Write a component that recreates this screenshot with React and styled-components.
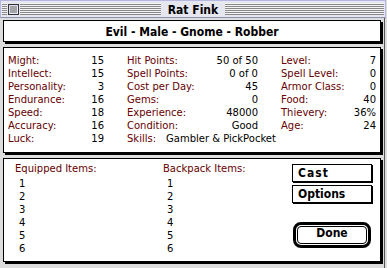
import React from 'react';
import styled, { createGlobalStyle } from 'styled-components';

const Global = createGlobalStyle`
  html, body { margin: 0; padding: 0; background: #dddddd; }
  body { width: 387px; height: 268px; overflow: hidden; }
`;

const chicago = `"DejaVu Sans Condensed", "DejaVu Sans", sans-serif`;
const geneva = `"DejaVu Sans", "Liberation Sans", sans-serif`;

const Window = styled.div`
  width: 387px;
  height: 268px;
  background: #dddddd;
  display: flex;
  flex-direction: column;
  font-family: ${geneva};
  font-size: 10px;
  color: #000;
`;

const TitleBar = styled.div`
  width: 386px;
  height: 18px;
  box-sizing: border-box;
  border: 1px solid #b6b6e2;
  border-bottom-color: #8e8eb0;
  background: #e6e6ee;
  padding: 2px 1px 0;
`;

const Stripes = styled.div`
  height: 12px;
  display: flex;
  background: repeating-linear-gradient(to bottom, #f4f4f4 0 1px, #888888 1px 2px);
`;

const CloseWrap = styled.div`
  margin-left: 5px;
  padding: 1px 1px 0;
  background: #e6e6ee;
  display: flex;
`;

const CloseBox = styled.div`
  width: 11px;
  height: 11px;
  box-sizing: border-box;
  border: 1px solid #333;
  background: #a4a4a4;
  box-shadow: inset 1px 1px 0 #d8d8f4, inset -1px -1px 0 #e8e8ff;
`;

const TitleCenter = styled.div`
  flex: 1;
  display: flex;
  justify-content: center;
  padding-right: 18px;
`;

const Title = styled.div`
  height: 12px;
  line-height: 14px;
  padding: 0 7px;
  background: #e6e6ee;
  font-family: ${chicago};
  font-weight: bold;
  font-size: 12px;
  white-space: nowrap;
`;

const Body = styled.div`
  flex: 1;
  width: 385px;
  box-sizing: border-box;
  border-right: 1px solid #555;
  padding: 2px 0 0 3px;
  display: flex;
  flex-direction: column;
  gap: 5px;
`;

const Panel = styled.div`
  width: 378px;
  height: ${p => p.$h}px;
  box-sizing: border-box;
  background: #fff;
  border: 1px solid #000;
  box-shadow: 2px 2px 0 #000;
`;

const Heading = styled.div`
  font-family: ${chicago};
  font-weight: bold;
  font-size: 12px;
  line-height: 16px;
  padding-top: 3px;
  text-align: center;
  white-space: nowrap;
`;

const StatsGrid = styled.div`
  display: grid;
  grid-template-columns: 96px 131px 95px;
  column-gap: 23px;
  grid-auto-rows: 13px;
  padding: 6px 0 0 4px;
  line-height: 13px;
`;

const Stat = styled.div`
  display: flex;
  justify-content: space-between;
  white-space: nowrap;
  grid-column: ${p => (p.$span ? `span ${p.$span}` : 'auto')};
`;

const Label = styled.span`
  color: #660000;
`;

const Value = styled.span`
  color: #000;
  margin-left: ${p => p.$gap || 0}px;
`;

const ItemsRow = styled.div`
  display: flex;
  padding: 3px 0 0 11px;
  height: 100%;
  box-sizing: border-box;
`;

const ItemColumn = styled.div`
  width: ${p => p.$w}px;
  display: flex;
  flex-direction: column;
  line-height: 13px;
`;

const ItemHeader = styled.div`
  color: #660000;
  margin-bottom: 2px;
  white-space: nowrap;
`;

const ItemNumber = styled.div`
  padding-left: 4px;
`;

const ButtonColumn = styled.div`
  display: flex;
  flex-direction: column;
  padding-top: 2px;
  width: 81px;
`;

const PlainButton = styled.button`
  width: 80px;
  height: 18px;
  box-sizing: border-box;
  margin: 0 0 ${p => p.$mb || 0}px;
  padding: 0 0 0 5px;
  border: 1px solid #000;
  box-shadow: 1px 1px 0 #000;
  background: #fff;
  text-align: left;
  font-family: ${chicago};
  font-weight: bold;
  font-size: 12px;
  line-height: 16px;
  color: #000;
  letter-spacing: ${p => p.$ls || 0}px;
`;

const DefaultRing = styled.div`
  margin: 19px 0 0 1px;
  width: 78px;
  height: 26px;
  box-sizing: border-box;
  border: 3px solid #000;
  border-radius: 8px;
  padding: 1px;
  display: flex;
`;

const DefaultButton = styled.button`
  flex: 1;
  box-sizing: border-box;
  border: 1px solid #000;
  border-radius: 4px;
  background: #fff;
  margin: 0;
  padding: 0 0 3px;
  font-family: ${chicago};
  font-weight: bold;
  font-size: 12px;
  line-height: 13px;
  color: #000;
  text-align: center;
`;

const stats = [
  [['Might:', '15'], ['Hit Points:', '50 of 50'], ['Level:', '7']],
  [['Intellect:', '15'], ['Spell Points:', '0 of 0'], ['Spell Level:', '0']],
  [['Personality:', '3'], ['Cost per Day:', '45'], ['Armor Class:', '0']],
  [['Endurance:', '16'], ['Gems:', '0'], ['Food:', '40']],
  [['Speed:', '18'], ['Experience:', '48000'], ['Thievery:', '36%']],
  [['Accuracy:', '16'], ['Condition:', 'Good'], ['Age:', '24']],
];

const slots = ['1', '2', '3', '4', '5', '6'];

export default function App() {
  return (
    <>
      <Global />
      <Window>
        <TitleBar>
          <Stripes>
            <CloseWrap>
              <CloseBox />
            </CloseWrap>
            <TitleCenter>
              <Title>Rat Fink</Title>
            </TitleCenter>
          </Stripes>
        </TitleBar>
        <Body>
          <Panel $h={22}>
            <Heading>Evil - Male - Gnome - Robber</Heading>
          </Panel>
          <Panel $h={106}>
            <StatsGrid>
              {stats.map((row, i) =>
                row.map(([l, v], j) => (
                  <Stat key={`${i}-${j}`}>
                    <Label>{l}</Label>
                    <Value>{v}</Value>
                  </Stat>
                ))
              )}
              <Stat>
                <Label>Luck:</Label>
                <Value>19</Value>
              </Stat>
              <Stat $span={2}>
                <span>
                  <Label>Skills:</Label>
                  <Value $gap={10}>Gambler &amp; PickPocket</Value>
                </span>
              </Stat>
            </StatsGrid>
          </Panel>
          <Panel $h={104}>
            <ItemsRow>
              <ItemColumn $w={148}>
                <ItemHeader>Equipped Items:</ItemHeader>
                {slots.map(s => (
                  <ItemNumber key={s}>{s}</ItemNumber>
                ))}
              </ItemColumn>
              <ItemColumn $w={129}>
                <ItemHeader>Backpack Items:</ItemHeader>
                {slots.map(s => (
                  <ItemNumber key={s}>{s}</ItemNumber>
                ))}
              </ItemColumn>
              <ButtonColumn>
                <PlainButton $mb={3} $ls={1}>Cast</PlainButton>
                <PlainButton>Options</PlainButton>
                <DefaultRing>
                  <DefaultButton>Done</DefaultButton>
                </DefaultRing>
              </ButtonColumn>
            </ItemsRow>
          </Panel>
        </Body>
      </Window>
    </>
  );
}
